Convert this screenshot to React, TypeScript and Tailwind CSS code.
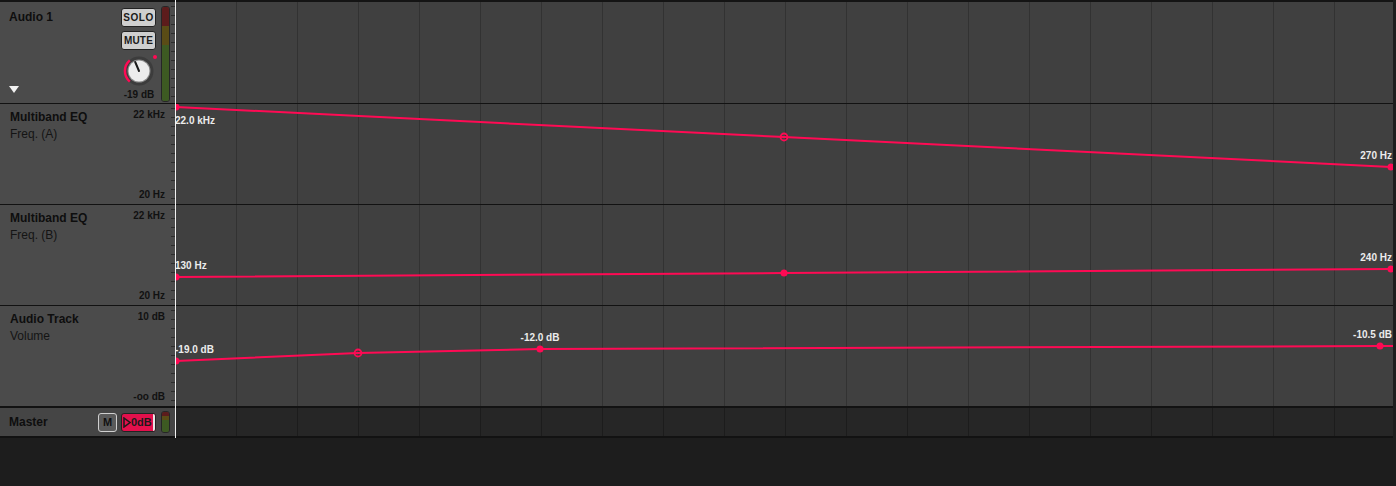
import React from 'react';

const LANE_W = 1218;
const RED = '#ff0a54';

type Pt = { x: number; y: number; hollow?: boolean };
type Label = { x: number; y: number; text: string; anchor: 'start' | 'middle' | 'end' };

interface LaneProps {
  height: number;
  points: Pt[];
  labels: Label[];
  tail?: number;
}

const gridXs = Array.from({ length: 21 }, (_, i) => i * 61);

const Ruler: React.FC<{ height: number }> = ({ height }) => (
  <svg width="5" height={height} className="block shrink-0">
    {Array.from({ length: Math.floor(height / 9) + 1 }, (_, i) => (
      <line key={i} x1="1" x2="5" y1={4 + i * 9 + 0.5} y2={4 + i * 9 + 0.5} stroke="#2c2c2c" strokeWidth="1" />
    ))}
  </svg>
);

const Lane: React.FC<LaneProps> = ({ height, points, labels, tail }) => {
  const path = points.map((p, i) => `${i === 0 ? 'M' : 'L'}${p.x} ${p.y}`).join(' ') + (tail ? ` L${LANE_W} ${tail}` : '');
  return (
    <svg width={LANE_W} height={height} className="block bg-[#404040]">
      {gridXs.map((x) => (
        <line key={x} x1={x + 0.5} x2={x + 0.5} y1="0" y2={height} stroke="#323232" strokeWidth="1" />
      ))}
      <path d={path} fill="none" stroke={RED} strokeWidth="2" />
      {points.map((p, i) =>
        p.hollow ? (
          <g key={i}>
            <circle cx={p.x} cy={p.y} r="3.5" fill="none" stroke={RED} strokeWidth="1.8" />
            <circle cx={p.x} cy={p.y} r="1.2" fill={RED} />
          </g>
        ) : (
          <circle key={i} cx={p.x} cy={p.y} r="3.5" fill={RED} />
        )
      )}
      {labels.map((l, i) => (
        <text
          key={i}
          x={l.x}
          y={l.y}
          textAnchor={l.anchor}
          fontFamily="'Liberation Sans', Arial, sans-serif"
          fontWeight="bold"
          fontSize="10"
          fill="#ececec"
        >
          {l.text}
        </text>
      ))}
    </svg>
  );
};

const Meter: React.FC<{ h: number }> = ({ h }) => (
  <div className="w-[9px] rounded-[3px] border border-[#262626] overflow-hidden flex flex-col" style={{ height: h }}>
    <div className="h-[20%] bg-[#5c1c1c]" />
    <div className="h-[20%] bg-[#5a4c16]" />
    <div className="flex-1 bg-[#3d5a22]" />
  </div>
);

const Knob: React.FC = () => (
  <svg width="37" height="35" viewBox="0 0 37 35" className="block">
    <circle cx="18" cy="17" r="14.5" fill="#3c3c3c" />
    <path d="M8.8 27.6 A14 14 0 0 1 8.8 6.4" fill="none" stroke={RED} strokeWidth="2.5" />
    <circle cx="18" cy="17" r="11.5" fill="#8a8a8a" />
    <circle cx="18" cy="17" r="10.5" fill="#ececec" />
    <line x1="18" y1="17" x2="14.2" y2="8" stroke="#1a1a1a" strokeWidth="2" strokeLinecap="round" />
    <circle cx="34" cy="3" r="2" fill={RED} />
  </svg>
);

const HeaderTitle: React.FC<{ title: string; sub: string; top: string; bottom: string }> = ({ title, sub, top, bottom }) => (
  <div className="w-[170px] h-full bg-[#4b4b4b] flex justify-between px-[10px] pr-[5px] pt-[5px] pb-[3px]">
    <div className="flex flex-col">
      <span className="text-[12px] font-bold text-[#0e0e0e] leading-[16px]">{title}</span>
      <span className="text-[12px] text-[#141414] leading-[16px] mt-[1px]">{sub}</span>
    </div>
    <div className="flex flex-col justify-between items-end">
      <span className="text-[10px] font-bold text-[#111] leading-[12px]">{top}</span>
      <span className="text-[10px] font-bold text-[#111] leading-[12px]">{bottom}</span>
    </div>
  </div>
);

export default function App() {
  return (
    <div className="relative w-[1396px] h-[486px] bg-[#1d1d1d] font-['Liberation_Sans',Arial,sans-serif] overflow-hidden">
      <div className="w-[1393px] border-t-2 border-[#141414]">
        {/* Audio 1 track */}
        <div className="flex h-[102px] border-b border-[#121212] bg-[#4b4b4b]">
          <div className="w-[170px] h-full flex">
            <div className="flex-1 flex flex-col justify-between pl-[9px] pt-[7px] pb-[9px]">
              <span className="text-[12px] font-bold text-[#0e0e0e] leading-[16px]">Audio 1</span>
              <svg width="10" height="8" viewBox="0 0 10 8" className="block">
                <polygon points="0,0 10,0 5,7" fill="#f2f2f2" />
              </svg>
            </div>
            <div className="flex flex-col items-start pt-[6px] w-[36px] mr-[4px]">
              <div className="w-[35px] h-[19px] rounded-[3px] border-[1.5px] border-[#222] bg-[#cfcfcf] text-[10px] font-bold text-[#1a1a1a] flex items-center justify-center tracking-[0.6px]">SOLO</div>
              <div className="w-[35px] h-[19px] mt-[4px] rounded-[3px] border-[1.5px] border-[#222] bg-[#cfcfcf] text-[10px] font-bold text-[#1a1a1a] flex items-center justify-center tracking-[0.2px]">MUTE</div>
              <div className="mt-[4px]"><Knob /></div>
              <span className="text-[10px] font-bold text-[#111] leading-[10px] mt-[1px] self-center">-19 dB</span>
            </div>
            <div className="pt-[4px]">
              <Meter h={96} />
            </div>
          </div>
          <Ruler height={101} />
          <svg width={LANE_W} height={101} className="block bg-[#404040]">
            {gridXs.map((x) => (
              <line key={x} x1={x + 0.5} x2={x + 0.5} y1="0" y2="101" stroke="#323232" strokeWidth="1" />
            ))}
          </svg>
        </div>

        {/* Multiband EQ A */}
        <div className="flex h-[101px] border-b border-[#121212]">
          <HeaderTitle title="Multiband EQ" sub="Freq. (A)" top="22 kHz" bottom="20 Hz" />
          <div className="bg-[#4b4b4b]"><Ruler height={100} /></div>
          <Lane
            height={100}
            points={[{ x: 1, y: 3 }, { x: 609, y: 33, hollow: true }, { x: 1216, y: 63 }]}
            labels={[
              { x: 0, y: 20, text: '22.0 kHz', anchor: 'start' },
              { x: 1217, y: 55, text: '270 Hz', anchor: 'end' },
            ]}
          />
        </div>

        {/* Multiband EQ B */}
        <div className="flex h-[101px] border-b border-[#121212]">
          <HeaderTitle title="Multiband EQ" sub="Freq. (B)" top="22 kHz" bottom="20 Hz" />
          <div className="bg-[#4b4b4b]"><Ruler height={100} /></div>
          <Lane
            height={100}
            points={[{ x: 1, y: 72 }, { x: 609, y: 68 }, { x: 1216, y: 64 }]}
            labels={[
              { x: 0, y: 64, text: '130 Hz', anchor: 'start' },
              { x: 1217, y: 56, text: '240 Hz', anchor: 'end' },
            ]}
          />
        </div>

        {/* Volume */}
        <div className="flex h-[102px] border-b-2 border-[#121212]">
          <HeaderTitle title="Audio Track" sub="Volume" top="10 dB" bottom="-oo dB" />
          <div className="bg-[#4b4b4b]"><Ruler height={100} /></div>
          <Lane
            height={100}
            points={[{ x: 1, y: 55 }, { x: 183, y: 47, hollow: true }, { x: 365, y: 43 }, { x: 1205, y: 40 }]}
            tail={40}
            labels={[
              { x: 0, y: 47, text: '-19.0 dB', anchor: 'start' },
              { x: 365, y: 35, text: '-12.0 dB', anchor: 'middle' },
              { x: 1217, y: 32, text: '-10.5 dB', anchor: 'end' },
            ]}
          />
        </div>

        {/* Master */}
        <div className="flex h-[30px] border-b-2 border-[#121212]">
          <div className="w-[175px] h-full bg-[#454545] flex items-center pl-[9px] pr-[5px]">
            <span className="text-[12px] font-bold text-[#0e0e0e] flex-1">Master</span>
            <div className="w-[19px] h-[19px] rounded-[3px] border-[1.5px] border-[#cfcfcf] bg-[#5a5a5a] text-[11px] font-bold text-[#111] flex items-center justify-center">M</div>
            <div className="ml-[4px] w-[35px] h-[19px] rounded-[3px] border-[1.5px] border-[#222] bg-[#e3104c] flex items-center overflow-hidden">
              <svg width="8" height="11" viewBox="0 0 8 11" className="ml-[1px] shrink-0">
                <polygon points="1,1 7,5.5 1,10" fill="none" stroke="#1a1a1a" strokeWidth="1.5" />
              </svg>
              <span className="text-[11px] font-bold text-[#1a1a1a] leading-[11px]">0dB</span>
              <div className="flex-1 h-full bg-[#e6e6e6] ml-[1px]" />
            </div>
            <div className="ml-[5px]"><Meter h={22} /></div>
          </div>
          <svg width={LANE_W} height={28} className="block bg-[#262626]">
            {gridXs.map((x) => (
              <line key={x} x1={x + 0.5} x2={x + 0.5} y1="0" y2="28" stroke="#1c1c1c" strokeWidth="1" />
            ))}
          </svg>
        </div>
      </div>

      {/* playhead */}
      <div className="absolute left-[175px] top-0 w-px h-[438px] bg-[#f0f0f0]" />
    </div>
  );
}
